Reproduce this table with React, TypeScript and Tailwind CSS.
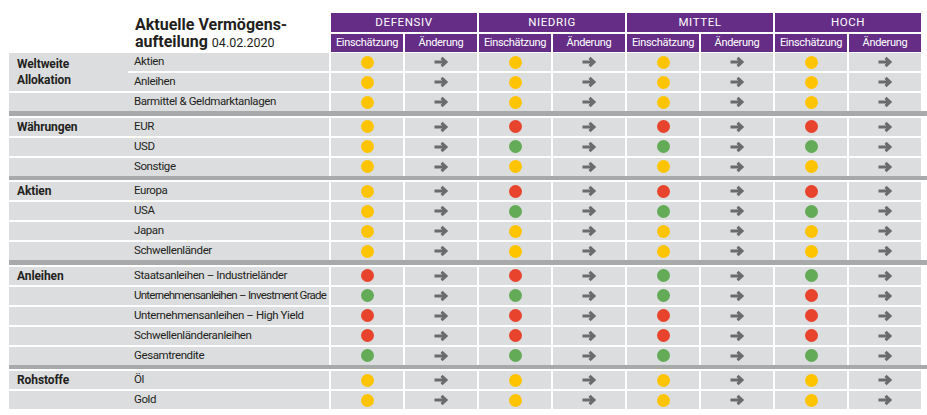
import React from 'react';

type Dot = 'Y' | 'R' | 'G';

interface Row {
	name: string;
	dots: Dot[]; // DEFENSIV, NIEDRIG, MITTEL, HOCH
	tight?: boolean;
}

interface Group {
	label: string[];
	span?: boolean;
	rows: Row[];
}

const dotColor: Record<Dot, string> = {
	Y: 'bg-[#fec400]',
	R: 'bg-[#e8432c]',
	G: 'bg-[#64ab57]',
};

const groups: Group[] = [
	{
		label: ['Weltweite', 'Allokation'],
		span: true,
		rows: [
			{ name: 'Aktien', dots: ['Y', 'Y', 'Y', 'Y'] },
			{ name: 'Anleihen', dots: ['Y', 'Y', 'Y', 'Y'] },
			{ name: 'Barmittel & Geldmarktanlagen', dots: ['Y', 'Y', 'Y', 'Y'] },
		],
	},
	{
		label: ['Währungen'],
		rows: [
			{ name: 'EUR', dots: ['Y', 'R', 'R', 'R'] },
			{ name: 'USD', dots: ['Y', 'G', 'G', 'G'] },
			{ name: 'Sonstige', dots: ['Y', 'Y', 'Y', 'Y'] },
		],
	},
	{
		label: ['Aktien'],
		rows: [
			{ name: 'Europa', dots: ['Y', 'R', 'R', 'R'] },
			{ name: 'USA', dots: ['Y', 'G', 'G', 'G'] },
			{ name: 'Japan', dots: ['Y', 'Y', 'Y', 'Y'] },
			{ name: 'Schwellenländer', dots: ['Y', 'Y', 'Y', 'Y'] },
		],
	},
	{
		label: ['Anleihen'],
		rows: [
			{ name: 'Staatsanleihen – Industrieländer', dots: ['R', 'R', 'G', 'G'] },
			{ name: 'Unternehmensanleihen – Investment Grade', dots: ['G', 'G', 'G', 'R'], tight: true },
			{ name: 'Unternehmensanleihen – High Yield', dots: ['R', 'R', 'R', 'R'] },
			{ name: 'Schwellenländeranleihen', dots: ['R', 'R', 'R', 'R'] },
			{ name: 'Gesamtrendite', dots: ['G', 'G', 'G', 'G'] },
		],
	},
	{
		label: ['Rohstoffe'],
		rows: [
			{ name: 'Öl', dots: ['Y', 'Y', 'Y', 'Y'] },
			{ name: 'Gold', dots: ['Y', 'Y', 'Y', 'Y'] },
		],
	},
];

const levels = ['DEFENSIV', 'NIEDRIG', 'MITTEL', 'HOCH'];

const Arrow = () => (
	<svg width="15" height="12" viewBox="0 0 15 12" fill="none">
		<path d="M0.5 6H12 M7.5 1.8L12 6L7.5 10.2" stroke="#6a6b6d" strokeWidth="3" />
	</svg>
);

export default function App() {
	return (
		<div className="w-[927px] h-[415px] bg-white overflow-hidden pt-[13px] pl-[9px] font-['Roboto','Liberation_Sans',sans-serif] text-[#231f20]">
			{/* header */}
			<div className="grid grid-cols-[320px_repeat(8,74px)] grid-rows-[19px_18px] gap-y-[2px]">
				<div className="row-span-2 pl-[126px] pt-[3px] leading-[17px]">
					<div className="text-[16px] font-bold">Aktuelle Vermögens-</div>
					<div className="text-[16px] font-bold">
						aufteilung <span className="text-[12.5px] font-normal">04.02.2020</span>
					</div>
				</div>
				{levels.map((l) => (
					<div
						key={l}
						className="col-span-2 border-l-2 border-white bg-[#662d87] text-white text-[11.5px] tracking-[0.6px] flex items-center justify-center"
					>
						{l}
					</div>
				))}
				{levels.map((l) => (
					<React.Fragment key={l + '-sub'}>
						<div className="border-l-2 border-white bg-[#662d87] text-white text-[11px] tracking-[-0.3px] flex items-center justify-center">
							Einschätzung
						</div>
						<div className="border-l-2 border-white bg-[#662d87] text-white text-[11px] tracking-[-0.3px] flex items-center justify-center">
							Änderung
						</div>
					</React.Fragment>
				))}
			</div>

			{/* body */}
			<div className="mt-[1px]">
				{groups.map((g, gi) => (
					<div key={gi}>
						<div className="grid grid-cols-[119px_201px_repeat(8,74px)] auto-rows-[18px] gap-y-[2px]">
							{g.rows.map((r, ri) => (
								<React.Fragment key={r.name}>
									{g.span && ri === 1 ? null : (
										<div
											className={`bg-[#dcdddf] pl-[8px] font-bold text-[12px] tracking-[-0.1px] leading-[16px] flex ${
												g.span && ri === 0 ? 'row-span-2 flex-col justify-center' : 'items-center'
											}`}
										>
											{ri === 0 && g.label.map((t) => <span key={t}>{t}</span>)}
										</div>
									)}
									<div
										className={`bg-[#dcdddf] pl-[6px] text-[11.5px] flex items-center whitespace-nowrap ${
											r.tight ? 'tracking-[-0.75px]' : 'tracking-[-0.4px]'
										}`}
									>
										{r.name}
									</div>
									{r.dots.map((d, di) => (
										<React.Fragment key={di}>
											<div className="border-l-2 border-white bg-[#dcdddf] flex items-center justify-center">
												<span className={`block size-[13px] rounded-full ${dotColor[d]}`} />
											</div>
											<div className="border-l-2 border-white bg-[#dcdddf] flex items-center justify-center">
												<Arrow />
											</div>
										</React.Fragment>
									))}
								</React.Fragment>
							))}
						</div>
						{gi < groups.length - 1 && <div className="h-[4.5px] bg-[#a8a9ab] mb-[2px]" />}
					</div>
				))}
			</div>
		</div>
	);
}
